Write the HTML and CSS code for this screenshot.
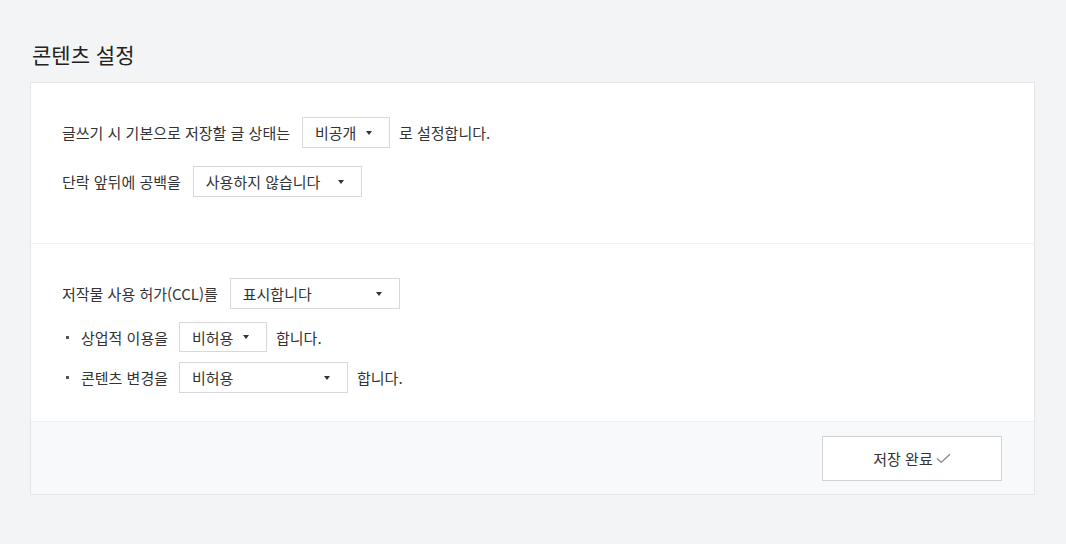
FILE: index.html
```html
<!DOCTYPE html>
<html lang="ko">
<head>
<meta charset="utf-8">
<link rel="stylesheet" href="styles.css">
</head>
<body>
<div class="page">
  <h2 class="title">콘텐츠 설정</h2>
  <div class="panel">
    <div class="section first">
      <div class="row">
        <span class="label">글쓰기 시 기본으로 저장할 글 상태는</span>
        <div class="select w88"><span>비공개</span><i class="caret"></i></div>
        <span class="after">로 설정합니다.</span>
      </div>
      <div class="row r2">
        <span class="label">단락 앞뒤에 공백을</span>
        <div class="select w169"><span>사용하지 않습니다</span><i class="caret"></i></div>
      </div>
    </div>
    <div class="section second">
      <div class="row">
        <span class="label">저작물 사용 허가(CCL)를</span>
        <div class="select w170"><span>표시합니다</span><i class="caret"></i></div>
      </div>
      <div class="row sub s1">
        <span class="bullet"></span>
        <span class="label">상업적 이용을</span>
        <div class="select w88"><span>비허용</span><i class="caret"></i></div>
        <span class="after">합니다.</span>
      </div>
      <div class="row sub s2">
        <span class="bullet"></span>
        <span class="label">콘텐츠 변경을</span>
        <div class="select w169"><span>비허용</span><i class="caret"></i></div>
        <span class="after">합니다.</span>
      </div>
    </div>
    <div class="footer">
      <button class="save">저장 완료<svg width="15" height="11" viewBox="0 0 15 11"><path d="M1 5.5 L5.2 9.4 L14 1.2" fill="none" stroke="#8a8a8a" stroke-width="1.4"/></svg></button>
    </div>
  </div>
</div>
</body>
</html>
```
FILE: styles.css
```css
* { box-sizing: border-box; }
html, body { margin: 0; padding: 0; }
body {
  background: #f3f4f6;
  font-family: "Noto Sans CJK KR", "Noto Sans", sans-serif;
  color: #333;
  font-size: 15px;
}
.page {
  padding: 40px 31px 0 30px;
}
.title {
  margin: 0 0 14px 2px;
  font-size: 21px;
  font-weight: 400;
  line-height: 28px;
  color: #222;
}
.panel {
  background: #fff;
  border: 1px solid #e3e5e8;
}
.section {
  padding: 34px 31px 0;
}
.section.first {
  height: 161px;
  border-bottom: 1px solid #f0f1f3;
}
.section.second {
  height: 177px;
}
.row {
  display: flex;
  align-items: center;
  height: 31px;
}
.row.r2 { margin-top: 18px; }
.row.s1 { margin-top: 13px; height: 30px; }
.row.s2 { margin-top: 10px; }
.label { margin-right: 12px; white-space: nowrap; }
.sub .label { margin-right: 11px; }
.after { margin-left: 9px; white-space: nowrap; }
.select {
  height: 100%;
  border: 1px solid #d6d8db;
  background: #fff;
  display: flex;
  align-items: center;
  justify-content: space-between;
  padding: 0 17px 0 12px;
}
.w88 { width: 88px; }
.w169 { width: 169px; }
.w170 { width: 170px; }
.caret {
  width: 0; height: 0;
  border-left: 3.5px solid transparent;
  border-right: 3.5px solid transparent;
  border-top: 4.5px solid #333;
}
.sub .bullet {
  width: 3px; height: 3px;
  background: #555;
  margin: 0 12px 0 4px;
}
.footer {
  background: #f8f9fa;
  border-top: 1px solid #f0f1f3;
  display: flex;
  justify-content: flex-end;
  padding: 14px 32px 13px;
}
.save {
  width: 180px;
  height: 45px;
  background: #fff;
  border: 1px solid #cfd1d4;
  font-family: inherit;
  font-size: 15px;
  color: #333;
  display: flex;
  align-items: center;
  justify-content: center;
  gap: 3px;
  cursor: pointer;
}
```
